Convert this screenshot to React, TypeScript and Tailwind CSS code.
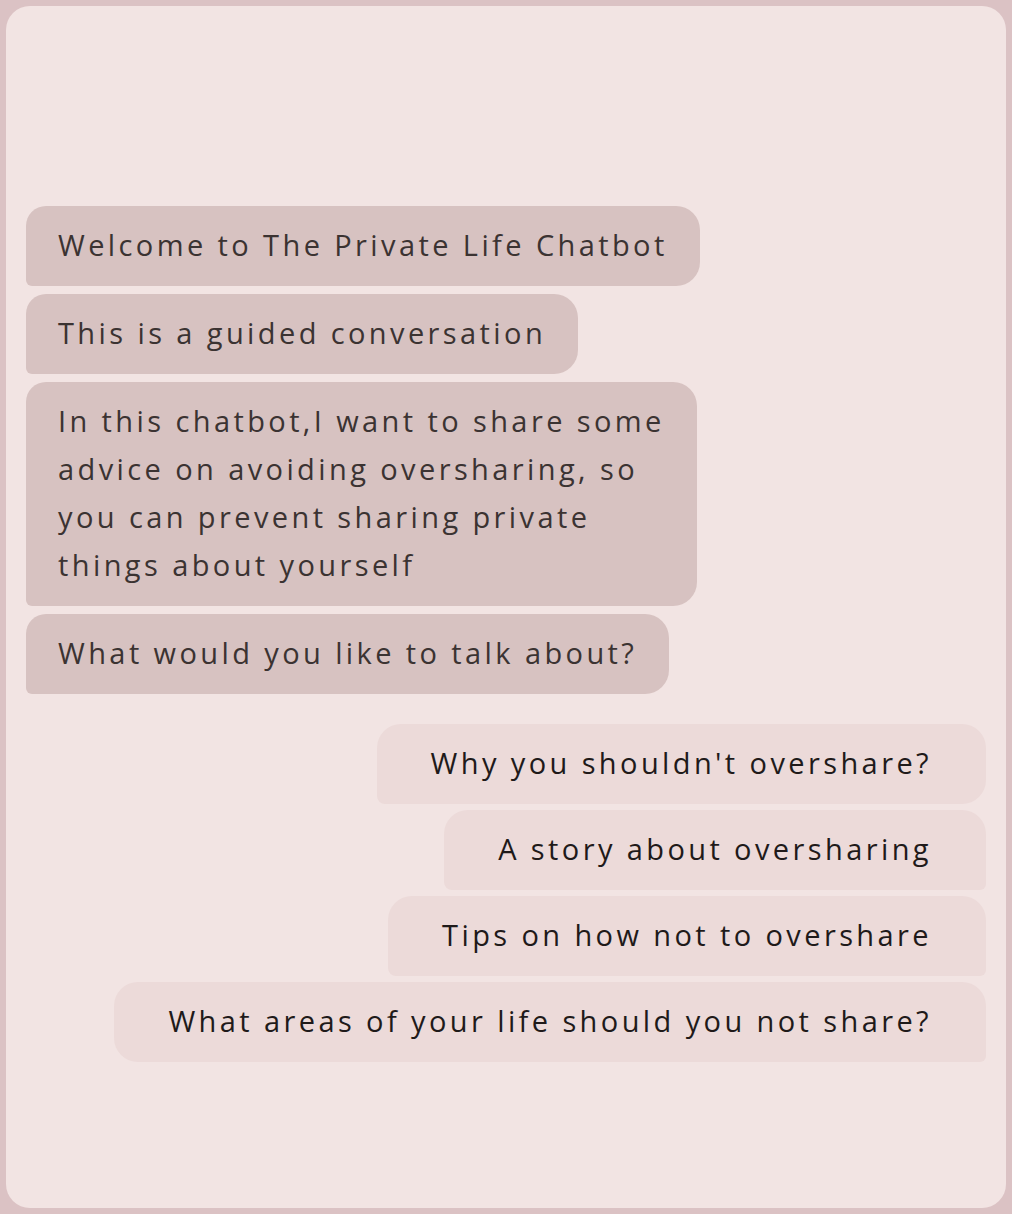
import React from "react";

const bot: React.ReactNode[] = [
  "Welcome to The Private Life Chatbot",
  "This is a guided conversation",
  <>
    In this chatbot,I want to share some
    <br />
    advice on avoiding oversharing, so
    <br />
    you can prevent sharing private
    <br />
    things about yourself
  </>,
  "What would you like to talk about?",
];

const options = [
  { t: "Why you shouldn't overshare?", r: "rounded-[24px] rounded-bl-[8px]" },
  { t: "A story about oversharing", r: "rounded-[24px] rounded-bl-[8px] rounded-br-[6px]" },
  { t: "Tips on how not to overshare", r: "rounded-[24px] rounded-bl-[8px] rounded-br-[6px]" },
  { t: "What areas of your life should you not share?", r: "rounded-[24px] rounded-br-[6px]" },
];

export default function App() {
  return (
    <div className="w-[1012px] h-[1214px] bg-[#dbc2c4] p-[6px]">
      <div
        className="h-full rounded-[24px] bg-[#f2e4e3] px-[20px] pt-[200px]"
        style={{ fontFamily: "'Open Sans', 'Liberation Sans', sans-serif" }}
      >
        <div className="flex flex-col items-start gap-[8px]">
          {bot.map((b, i) => (
            <div
              key={i}
              className="w-fit rounded-[24px] rounded-tl-[20px] rounded-bl-[6px] bg-[#d7c2c1] pl-[32px] pr-[32px] pt-[15px] pb-[17px] text-[29px] leading-[48px] tracking-[3.4px] text-[#3b3332]"
            >
              {b}
            </div>
          ))}
        </div>
        <div className="mt-[30px] flex flex-col items-end gap-[6px]">
          {options.map((o, i) => (
            <div
              key={i}
              className={`w-fit ${o.r} bg-[#ecdad9] px-[54px] pt-[15px] pb-[17px] text-right text-[29px] leading-[48px] tracking-[3.4px] text-[#1f1a1a]`}
            >
              {o.t}
            </div>
          ))}
        </div>
      </div>
    </div>
  );
}
